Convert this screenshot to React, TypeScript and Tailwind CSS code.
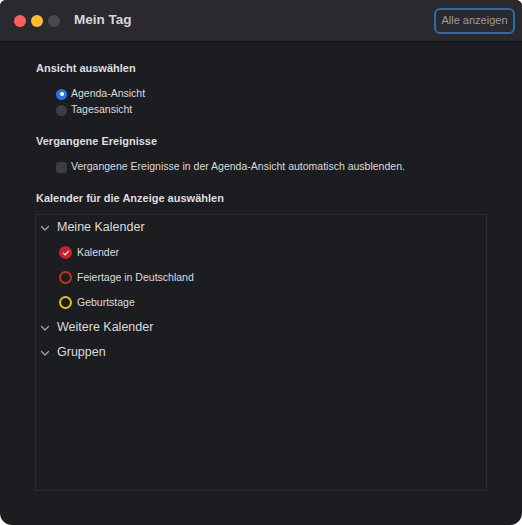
import * as React from 'react';

const font = { fontFamily: '"Liberation Sans", Arial, sans-serif' };

const Chevron = () => (
  <svg width="10" height="10" viewBox="0 0 10 10" className="shrink-0">
    <path d="M1.5 3.5 L5 7 L8.5 3.5" fill="none" stroke="#a9a9ad" strokeWidth="1.2" strokeLinecap="round" strokeLinejoin="round" />
  </svg>
);

const CalItem = ({ label, ring, filled }: { label: string; ring: string; filled?: boolean }) => (
  <div className="flex items-center h-[25px] pl-[23px] gap-[5px]">
    <span
      className={
        filled
          ? 'w-[13px] h-[13px] rounded-full bg-[#c9202f] flex items-center justify-center'
          : 'w-[13px] h-[13px] rounded-full border-2 ' + ring
      }
    >
      {filled && (
        <svg width="8" height="8" viewBox="0 0 8 8">
          <path d="M1.4 4.1 L3.2 5.9 L6.6 2.1" fill="none" stroke="#fff" strokeWidth="1.1" strokeLinecap="round" strokeLinejoin="round" />
        </svg>
      )}
    </span>
    <span className="text-[10.5px] text-[#dcdcde]">{label}</span>
  </div>
);

const Group = ({ label }: { label: string }) => (
  <div className="flex items-center h-[25px] pl-[4px] gap-[7px]">
    <Chevron />
    <span className="text-[12.5px] text-[#dcdcde]">{label}</span>
  </div>
);

export default function App() {
  return (
    <div className="w-[522px] h-[525px] bg-white" style={font}>
      <div className="w-full h-full rounded-t-[6px] rounded-b-[12px] overflow-hidden bg-[#1c1d21] flex flex-col">
        {/* title bar */}
        <div className="h-[42px] shrink-0 bg-[#2a2a2e] border-b border-[#111214] flex items-center pl-[14px] pr-[7px]">
          <div className="flex gap-[5px]">
            <span className="w-[12px] h-[12px] rounded-full bg-[#fe5f57]" />
            <span className="w-[12px] h-[12px] rounded-full bg-[#febc2e]" />
            <span className="w-[12px] h-[12px] rounded-full bg-[#4a4a4e]" />
          </div>
          <span className="ml-[14px] text-[13.5px] font-bold text-[#d8d8da]">Mein Tag</span>
          <button className="ml-auto h-[26px] w-[81px] rounded-[6px] border-2 border-[#2b6bb0] text-[11px] text-[#9c9ca0]">
            Alle anzeigen
          </button>
        </div>

        {/* body */}
        <div className="flex-1 flex flex-col px-[35px] pt-[16px] pb-[34px]">
          <div className="text-[11px] font-bold text-[#dededf] h-[20px] flex items-center pl-[1px]">Ansicht auswählen</div>
          <div className="flex flex-col pl-[21px] mt-[8px]">
            <div className="flex items-center h-[16px] gap-[4px]">
              <span className="w-[11px] h-[11px] rounded-full bg-[#2a73e4] flex items-center justify-center">
                <span className="w-[4px] h-[4px] rounded-full bg-white" />
              </span>
              <span className="text-[10.5px] text-[#dcdcde]">Agenda-Ansicht</span>
            </div>
            <div className="flex items-center h-[16px] gap-[4px]">
              <span className="w-[11px] h-[11px] rounded-full bg-[#3d3e42]" />
              <span className="text-[10.5px] text-[#dcdcde]">Tagesansicht</span>
            </div>
          </div>

          <div className="text-[11px] font-bold text-[#dededf] h-[20px] flex items-center pl-[1px] mt-[13px]">Vergangene Ereignisse</div>
          <div className="flex items-center h-[16px] gap-[4px] pl-[21px] mt-[8px]">
            <span className="w-[11px] h-[11px] rounded-[3px] bg-[#3d3e42]" />
            <span className="text-[10.5px] text-[#dcdcde]">Vergangene Ereignisse in der Agenda-Ansicht automatisch ausblenden.</span>
          </div>

          <div className="text-[11px] font-bold text-[#dededf] h-[20px] flex items-center pl-[1px] mt-[13px]">Kalender für die Anzeige auswählen</div>
          <div className="mt-[6px] flex-1 border border-[#2c2d31] flex flex-col">
            <Group label="Meine Kalender" />
            <CalItem label="Kalender" ring="" filled />
            <CalItem label="Feiertage in Deutschland" ring="border-[#c4331d]" />
            <CalItem label="Geburtstage" ring="border-[#e3c40d]" />
            <Group label="Weitere Kalender" />
            <Group label="Gruppen" />
          </div>
        </div>
      </div>
    </div>
  );
}
